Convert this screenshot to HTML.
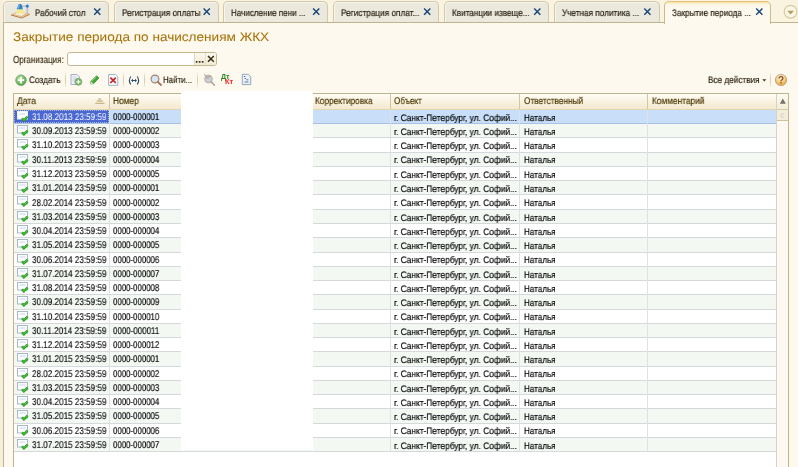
<!DOCTYPE html>
<html><head><meta charset="utf-8">
<style>
*{box-sizing:border-box;margin:0;padding:0}
html,body{width:798px;height:467px;overflow:hidden;background:#f6efdc}
body{position:relative;font-family:"Liberation Sans",sans-serif}
.a{position:absolute}
.t{position:absolute;white-space:nowrap;line-height:1;transform-origin:0 0;will-change:transform;text-rendering:geometricPrecision}
.tab{position:absolute;top:1px;height:22px;background:#ebe8dd;border:1px solid #d3c9aa;border-bottom:none;border-radius:5px 5px 0 0;box-shadow:inset 1px 1px 0 #f7f5ee}
.x{position:absolute;top:8px;width:8px;height:8px}
.panel{position:absolute;left:3px;top:22px;width:820px;height:460px;background:#fdf9ee;border:1px solid #bdb38f}
.atab{position:absolute;left:664px;top:1px;width:107px;height:23px;background:linear-gradient(#fbe3a8 0,#fdf6e2 2.5px,#fdf9ee 5px);border:1px solid #c8bb92;border-top-color:#e8c27a;border-bottom:none;border-radius:5px 5px 0 0}
.sep{position:absolute;top:73px;width:1px;height:14px;background:linear-gradient(rgba(214,202,168,0.2),#d9ceb0 35%,#d9ceb0 65%,rgba(214,202,168,0.2))}
.tbl{position:absolute;left:13px;top:93px;width:776px;height:380px;background:#fff;border:1px solid #bfb48e}
.hdr{position:absolute;left:14px;top:94px;width:763px;height:16px;background:linear-gradient(#fefcf5,#f4e9cf);border-bottom:1px solid #e2d6b2}
.vl{position:absolute;top:94px;width:1px;height:15px;background:#d2c69e}
.row{position:absolute;left:14px;width:763px;background:#fff;border-bottom:1px solid #d5d9dc}
.row.odd{background:#f3f8f3}
.row.sel{background:#c9def9;border-bottom:1px solid #a9c1e6}
.gl{position:absolute;top:110px;width:1px;height:341px;background:#dde1e8}
.ico{position:absolute;left:17px;width:12px;height:11px}
.ico i{position:absolute;left:0;top:0;width:11px;height:9px;border:1px solid #a9b6c6;background:#fbfcfe}
.ico i:after{content:"";position:absolute;left:2px;top:2px;width:6px;height:1px;background:#c5d2e4}
.ico b{position:absolute;left:4px;top:4px;width:8px;height:7px}
</style></head><body>

<!-- tabs -->
<div class="a" style="left:3px;top:0;width:795px;height:22px;background:#faf3df"></div>
<div class="tab" style="left:3px;width:106px"></div>
<div class="tab" style="left:114px;width:105px"></div>
<div class="tab" style="left:223px;width:105px"></div>
<div class="tab" style="left:333px;width:106px"></div>
<div class="tab" style="left:444px;width:105px"></div>
<div class="tab" style="left:554px;width:106px"></div>

<div class="panel"></div>
<div class="atab"></div>

<!-- tab icon -->
<svg class="a" style="left:0;top:0" width="34" height="22" viewBox="0 0 34 22">
  <path d="M11 14.3 L22 17.6 L29.7 13.6 L29.7 14.8 L22 18.6 L11 15.4 Z" fill="#b27a46"/>
  <path d="M11 14.3 L17.5 11.8 L29.7 13.5 L22 17.6 Z" fill="#e2b88a"/>
  <path d="M14 14.2 L18 12.6 L26 13.6 L21.5 16.1 Z" fill="#f8ecd8"/>
  <path d="M17.6 9 L22.4 9 L24.5 13.6 L16 13.6 Z" fill="#f2ea8e"/>
  <path d="M22 6.2 H26.5" stroke="#a6acbb" stroke-width="1"/>
  <rect x="26.5" y="7" width="1.6" height="6.5" fill="#b9bdc9"/>
  <circle cx="27.3" cy="6.1" r="1.6" fill="#2b80c9"/>
  <path d="M16.8 9.2 L18.4 4.6 Q20 3.6 21.6 4.6 L22.8 9.2 Z" fill="#2b80c9"/>
  <path d="M18.6 5.2 L19.8 4.8 L19 8.6 L17.9 8.6 Z" fill="#7fc0ee"/>
</svg>
<!-- tab close X's -->
<svg class="a" style="left:0;top:0" width="798" height="22">
 <g stroke="#1a4678" stroke-width="1.45" fill="none">
  <path d="M94.2 8.6 L100.4 14.8 M100.4 8.6 L94.2 14.8"/>
  <path d="M203.6 8.6 L209.8 14.8 M209.8 8.6 L203.6 14.8"/>
  <path d="M313.1 8.6 L319.3 14.8 M319.3 8.6 L313.1 14.8"/>
  <path d="M424.1 8.6 L430.3 14.8 M430.3 8.6 L424.1 14.8"/>
  <path d="M534.2 8.6 L540.4 14.8 M540.4 8.6 L534.2 14.8"/>
  <path d="M644.3 8.6 L650.5 14.8 M650.5 8.6 L644.3 14.8"/>
  <path d="M756.2 8.6 L762.4 14.8 M762.4 8.6 L756.2 14.8"/>
 </g>
 <circle cx="790.6" cy="11.7" r="6.4" fill="#fbf6e3" stroke="#d6caa2" stroke-width="1.2"/>
 <path d="M787.2 10.8 L794 10.8 L790.6 14.6 Z" fill="#b09e66"/>
</svg>

<!-- organization input -->
<div class="a" style="left:67px;top:52px;width:150px;height:14px;background:#fff;border:1px solid #c4b88f;border-radius:3px"></div>
<div class="a" style="left:195px;top:53px;width:21px;height:12px;background:linear-gradient(#fcf8ef,#f1ebd6);border-radius:0 2px 2px 0"></div>
<div class="a" style="left:194px;top:53px;width:1px;height:12px;background:#e0d8c0"></div>
<div class="a" style="left:205px;top:53px;width:1px;height:12px;background:#e6dfc8"></div>
<svg class="a" style="left:190px;top:50px" width="30" height="18">
  <rect x="5.8" y="11" width="1.7" height="1.7" fill="#3a2e12"/>
  <rect x="8.8" y="11" width="1.7" height="1.7" fill="#3a2e12"/>
  <rect x="11.8" y="11" width="1.7" height="1.7" fill="#3a2e12"/>
  <path d="M18 6 L23.8 11.8 M23.8 6 L18 11.8" stroke="#3a2e12" stroke-width="1.5"/>
</svg>

<!-- toolbar -->
<svg class="a" style="left:0;top:68px" width="270" height="22">
  <defs>
    <radialGradient id="gg" cx="40%" cy="35%" r="70%"><stop offset="0" stop-color="#bfe8a8"/><stop offset="1" stop-color="#4a9e3a"/></radialGradient>
    <radialGradient id="og" cx="40%" cy="35%" r="70%"><stop offset="0" stop-color="#fff0c0"/><stop offset="1" stop-color="#e89a3a"/></radialGradient>
  </defs>
  <circle cx="21" cy="12.2" r="5.3" fill="url(#gg)" stroke="#6a9a6a" stroke-width="0.7"/>
  <path d="M21 9 V15.4 M17.8 12.2 H24.2" stroke="#fff" stroke-width="1.8"/>
  <!-- copy doc -->
  <path d="M71 6.5 H77 L79.5 9 V16.5 H71 Z" fill="#eef2f8" stroke="#9aaac0" stroke-width="0.9"/>
  <path d="M72.5 9 H76 M72.5 11 H77.5 M72.5 13 H75" stroke="#c2ccd8" stroke-width="0.8"/>
  <circle cx="78.4" cy="13.8" r="3.5" fill="#6cbc58" stroke="#8a9a8a" stroke-width="0.7"/>
  <path d="M78.4 11.8 V15.8 M76.4 13.8 H80.4" stroke="#fff" stroke-width="1.3"/>
  <!-- pencil -->
  <path d="M90.3 15.9 L91 13.3 L96.6 7.7 L99 10.1 L93.4 15.7 Z" fill="#3fa533" stroke="#247c22" stroke-width="0.6"/>
  <path d="M92 13.2 L96.4 8.8" stroke="#a6e08a" stroke-width="0.9"/>
  <path d="M90.3 15.9 L91 13.3 L93.4 15.7 Z" fill="#d8efc8"/>
  <!-- delete doc -->
  <path d="M108.6 6.5 H115.5 L117.8 8.8 V17.3 H108.6 Z" fill="#fbfcff" stroke="#9aaac0" stroke-width="0.9"/>
  <path d="M110.4 9.6 L115.8 15 M115.8 9.6 L110.4 15" stroke="#c82020" stroke-width="1.7"/>
  <!-- (<->) -->
  <path d="M130.8 8.5 Q128 12.5 130.8 16.5 M137.2 8.5 Q140 12.5 137.2 16.5" stroke="#2d4868" stroke-width="1.1" fill="none"/>
  <path d="M131 12.5 L133 10.8 V14.2 Z M137 12.5 L135 10.8 V14.2 Z" fill="#2d4868"/>
  <rect x="132.5" y="12" width="3" height="1" fill="#2d4868"/>
  <!-- search -->
  <circle cx="155" cy="11" r="3.9" fill="#d6e4f4" stroke="#a07f66" stroke-width="1.1"/>
  <path d="M157.8 13.8 L161 17" stroke="#a57458" stroke-width="1.8" stroke-linecap="round"/>
  <!-- grey search -->
  <circle cx="208.5" cy="11" r="3.7" fill="#c8d0dc" stroke="#b9aca2" stroke-width="1.1"/>
  <path d="M204.3 6.3 L208.5 11 M206 9.6 L210.8 8.4" stroke="#b7a79c" stroke-width="1.1"/>
  <path d="M211.2 13.8 L214.2 17" stroke="#b9a69a" stroke-width="1.8" stroke-linecap="round"/>
  <!-- Dt Kt -->
  <text x="221" y="11.4" font-family="Liberation Sans" font-size="6.8" font-weight="bold" fill="#2a8424" textLength="8.6" lengthAdjust="spacingAndGlyphs" style="will-change:transform">Дт</text>
  <text x="225" y="16.4" font-family="Liberation Sans" font-size="6.8" font-weight="bold" fill="#f02828" textLength="8.3" lengthAdjust="spacingAndGlyphs" style="will-change:transform">Кт</text>
  <!-- report doc -->
  <path d="M242.3 6.3 H248.3 L250.7 8.7 V16.6 H242.3 Z" fill="#eef3fa" stroke="#8a9cb8" stroke-width="0.9"/>
  <path d="M243.8 8.5 H245.3 M244.5 10.5 H246 M246.3 11.8 H248.3 M244.5 14 H248.5" stroke="#4a6a90" stroke-width="0.9"/>
</svg>
<div class="sep" style="left:65px"></div>
<div class="sep" style="left:123px"></div>
<div class="sep" style="left:144px"></div>
<div class="sep" style="left:197px"></div>
<div class="sep" style="left:770px"></div>
<svg class="a" style="left:760px;top:70px" width="38" height="20">
  <path d="M2.3 9.3 H6.3 L4.3 11.5 Z" fill="#3b3121"/>
  <defs><radialGradient id="hg" cx="45%" cy="30%" r="75%"><stop offset="0" stop-color="#fff6d8"/><stop offset="0.55" stop-color="#f8cc7c"/><stop offset="1" stop-color="#e99a3c"/></radialGradient></defs>
  <circle cx="21" cy="10" r="5.6" fill="url(#hg)" stroke="#a8906e" stroke-width="0.7"/>
  <path d="M19.1 8.6 Q19.1 6.6 21 6.6 Q22.9 6.6 22.9 8.3 Q22.9 9.4 21.6 10 Q21 10.3 21 11.2" stroke="#7a5530" stroke-width="1.3" fill="none"/>
  <rect x="20.3" y="12.1" width="1.4" height="1.4" fill="#7a5530"/>
</svg>

<!-- table -->
<div class="tbl"></div>
<div class="hdr"></div>
<div class="vl" style="left:109px"></div>
<div class="vl" style="left:390px"></div>
<div class="vl" style="left:519px"></div>
<div class="vl" style="left:647px"></div>
<svg class="a" style="left:94px;top:96px" width="12" height="10">
  <rect x="4.2" y="2.2" width="2.8" height="1.6" rx="0.6" fill="#c9bb8a"/>
  <rect x="2.8" y="4.2" width="6" height="1.6" fill="#cabd8e"/>
  <rect x="1.3" y="6.7" width="9.2" height="1.3" fill="#c6b888"/>
</svg>
<div class="row sel" style="top:110px;height:14px"></div>
<div class="row odd" style="top:124px;height:14px"></div>
<div class="row" style="top:138px;height:15px"></div>
<div class="row odd" style="top:153px;height:14px"></div>
<div class="row" style="top:167px;height:14px"></div>
<div class="row odd" style="top:181px;height:14px"></div>
<div class="row" style="top:195px;height:15px"></div>
<div class="row odd" style="top:210px;height:14px"></div>
<div class="row" style="top:224px;height:14px"></div>
<div class="row odd" style="top:238px;height:15px"></div>
<div class="row" style="top:253px;height:14px"></div>
<div class="row odd" style="top:267px;height:14px"></div>
<div class="row" style="top:281px;height:14px"></div>
<div class="row odd" style="top:295px;height:15px"></div>
<div class="row" style="top:310px;height:14px"></div>
<div class="row odd" style="top:324px;height:14px"></div>
<div class="row" style="top:338px;height:14px"></div>
<div class="row odd" style="top:352px;height:15px"></div>
<div class="row" style="top:367px;height:14px"></div>
<div class="row odd" style="top:381px;height:14px"></div>
<div class="row" style="top:395px;height:14px"></div>
<div class="row odd" style="top:409px;height:15px"></div>
<div class="row" style="top:424px;height:14px"></div>
<div class="row odd" style="top:438px;height:14px"></div>
<div class="gl" style="left:109px"></div>
<div class="gl" style="left:390px"></div>
<div class="gl" style="left:519px"></div>
<div class="gl" style="left:647px"></div>
<!-- selected cell -->
<div class="a" style="left:14px;top:110px;width:95px;height:13px;background:#4b68d2;border:1px dotted #a8b8ee"></div>
<svg class="a" style="left:16px;top:109px" width="14" height="14"><rect x="1.5" y="2.5" width="10" height="7.5" fill="#fcfdff" stroke="#eef2fb"/><path d="M3.5 5 H9.5" stroke="#c9d6e8"/><path d="M6 9.3 L7.9 11.3 L11.6 7.6" stroke="#249a1c" stroke-width="2.4" fill="none"/><path d="M6 9.3 L7.9 11.3 L11.6 7.6" stroke="#58cc44" stroke-width="1.0" fill="none"/></svg>
<svg class="a" style="left:16px;top:123px" width="14" height="14"><rect x="1.5" y="2.5" width="10" height="7.5" fill="#fcfdff" stroke="#aab7c7"/><path d="M3.5 5 H9.5" stroke="#c9d6e8"/><path d="M6 9.3 L7.9 11.3 L11.6 7.6" stroke="#249a1c" stroke-width="2.4" fill="none"/><path d="M6 9.3 L7.9 11.3 L11.6 7.6" stroke="#58cc44" stroke-width="1.0" fill="none"/></svg>
<svg class="a" style="left:16px;top:137px" width="14" height="14"><rect x="1.5" y="2.5" width="10" height="7.5" fill="#fcfdff" stroke="#aab7c7"/><path d="M3.5 5 H9.5" stroke="#c9d6e8"/><path d="M6 9.3 L7.9 11.3 L11.6 7.6" stroke="#249a1c" stroke-width="2.4" fill="none"/><path d="M6 9.3 L7.9 11.3 L11.6 7.6" stroke="#58cc44" stroke-width="1.0" fill="none"/></svg>
<svg class="a" style="left:16px;top:152px" width="14" height="14"><rect x="1.5" y="2.5" width="10" height="7.5" fill="#fcfdff" stroke="#aab7c7"/><path d="M3.5 5 H9.5" stroke="#c9d6e8"/><path d="M6 9.3 L7.9 11.3 L11.6 7.6" stroke="#249a1c" stroke-width="2.4" fill="none"/><path d="M6 9.3 L7.9 11.3 L11.6 7.6" stroke="#58cc44" stroke-width="1.0" fill="none"/></svg>
<svg class="a" style="left:16px;top:166px" width="14" height="14"><rect x="1.5" y="2.5" width="10" height="7.5" fill="#fcfdff" stroke="#aab7c7"/><path d="M3.5 5 H9.5" stroke="#c9d6e8"/><path d="M6 9.3 L7.9 11.3 L11.6 7.6" stroke="#249a1c" stroke-width="2.4" fill="none"/><path d="M6 9.3 L7.9 11.3 L11.6 7.6" stroke="#58cc44" stroke-width="1.0" fill="none"/></svg>
<svg class="a" style="left:16px;top:180px" width="14" height="14"><rect x="1.5" y="2.5" width="10" height="7.5" fill="#fcfdff" stroke="#aab7c7"/><path d="M3.5 5 H9.5" stroke="#c9d6e8"/><path d="M6 9.3 L7.9 11.3 L11.6 7.6" stroke="#249a1c" stroke-width="2.4" fill="none"/><path d="M6 9.3 L7.9 11.3 L11.6 7.6" stroke="#58cc44" stroke-width="1.0" fill="none"/></svg>
<svg class="a" style="left:16px;top:194px" width="14" height="14"><rect x="1.5" y="2.5" width="10" height="7.5" fill="#fcfdff" stroke="#aab7c7"/><path d="M3.5 5 H9.5" stroke="#c9d6e8"/><path d="M6 9.3 L7.9 11.3 L11.6 7.6" stroke="#249a1c" stroke-width="2.4" fill="none"/><path d="M6 9.3 L7.9 11.3 L11.6 7.6" stroke="#58cc44" stroke-width="1.0" fill="none"/></svg>
<svg class="a" style="left:16px;top:209px" width="14" height="14"><rect x="1.5" y="2.5" width="10" height="7.5" fill="#fcfdff" stroke="#aab7c7"/><path d="M3.5 5 H9.5" stroke="#c9d6e8"/><path d="M6 9.3 L7.9 11.3 L11.6 7.6" stroke="#249a1c" stroke-width="2.4" fill="none"/><path d="M6 9.3 L7.9 11.3 L11.6 7.6" stroke="#58cc44" stroke-width="1.0" fill="none"/></svg>
<svg class="a" style="left:16px;top:223px" width="14" height="14"><rect x="1.5" y="2.5" width="10" height="7.5" fill="#fcfdff" stroke="#aab7c7"/><path d="M3.5 5 H9.5" stroke="#c9d6e8"/><path d="M6 9.3 L7.9 11.3 L11.6 7.6" stroke="#249a1c" stroke-width="2.4" fill="none"/><path d="M6 9.3 L7.9 11.3 L11.6 7.6" stroke="#58cc44" stroke-width="1.0" fill="none"/></svg>
<svg class="a" style="left:16px;top:237px" width="14" height="14"><rect x="1.5" y="2.5" width="10" height="7.5" fill="#fcfdff" stroke="#aab7c7"/><path d="M3.5 5 H9.5" stroke="#c9d6e8"/><path d="M6 9.3 L7.9 11.3 L11.6 7.6" stroke="#249a1c" stroke-width="2.4" fill="none"/><path d="M6 9.3 L7.9 11.3 L11.6 7.6" stroke="#58cc44" stroke-width="1.0" fill="none"/></svg>
<svg class="a" style="left:16px;top:252px" width="14" height="14"><rect x="1.5" y="2.5" width="10" height="7.5" fill="#fcfdff" stroke="#aab7c7"/><path d="M3.5 5 H9.5" stroke="#c9d6e8"/><path d="M6 9.3 L7.9 11.3 L11.6 7.6" stroke="#249a1c" stroke-width="2.4" fill="none"/><path d="M6 9.3 L7.9 11.3 L11.6 7.6" stroke="#58cc44" stroke-width="1.0" fill="none"/></svg>
<svg class="a" style="left:16px;top:266px" width="14" height="14"><rect x="1.5" y="2.5" width="10" height="7.5" fill="#fcfdff" stroke="#aab7c7"/><path d="M3.5 5 H9.5" stroke="#c9d6e8"/><path d="M6 9.3 L7.9 11.3 L11.6 7.6" stroke="#249a1c" stroke-width="2.4" fill="none"/><path d="M6 9.3 L7.9 11.3 L11.6 7.6" stroke="#58cc44" stroke-width="1.0" fill="none"/></svg>
<svg class="a" style="left:16px;top:280px" width="14" height="14"><rect x="1.5" y="2.5" width="10" height="7.5" fill="#fcfdff" stroke="#aab7c7"/><path d="M3.5 5 H9.5" stroke="#c9d6e8"/><path d="M6 9.3 L7.9 11.3 L11.6 7.6" stroke="#249a1c" stroke-width="2.4" fill="none"/><path d="M6 9.3 L7.9 11.3 L11.6 7.6" stroke="#58cc44" stroke-width="1.0" fill="none"/></svg>
<svg class="a" style="left:16px;top:294px" width="14" height="14"><rect x="1.5" y="2.5" width="10" height="7.5" fill="#fcfdff" stroke="#aab7c7"/><path d="M3.5 5 H9.5" stroke="#c9d6e8"/><path d="M6 9.3 L7.9 11.3 L11.6 7.6" stroke="#249a1c" stroke-width="2.4" fill="none"/><path d="M6 9.3 L7.9 11.3 L11.6 7.6" stroke="#58cc44" stroke-width="1.0" fill="none"/></svg>
<svg class="a" style="left:16px;top:309px" width="14" height="14"><rect x="1.5" y="2.5" width="10" height="7.5" fill="#fcfdff" stroke="#aab7c7"/><path d="M3.5 5 H9.5" stroke="#c9d6e8"/><path d="M6 9.3 L7.9 11.3 L11.6 7.6" stroke="#249a1c" stroke-width="2.4" fill="none"/><path d="M6 9.3 L7.9 11.3 L11.6 7.6" stroke="#58cc44" stroke-width="1.0" fill="none"/></svg>
<svg class="a" style="left:16px;top:323px" width="14" height="14"><rect x="1.5" y="2.5" width="10" height="7.5" fill="#fcfdff" stroke="#aab7c7"/><path d="M3.5 5 H9.5" stroke="#c9d6e8"/><path d="M6 9.3 L7.9 11.3 L11.6 7.6" stroke="#249a1c" stroke-width="2.4" fill="none"/><path d="M6 9.3 L7.9 11.3 L11.6 7.6" stroke="#58cc44" stroke-width="1.0" fill="none"/></svg>
<svg class="a" style="left:16px;top:337px" width="14" height="14"><rect x="1.5" y="2.5" width="10" height="7.5" fill="#fcfdff" stroke="#aab7c7"/><path d="M3.5 5 H9.5" stroke="#c9d6e8"/><path d="M6 9.3 L7.9 11.3 L11.6 7.6" stroke="#249a1c" stroke-width="2.4" fill="none"/><path d="M6 9.3 L7.9 11.3 L11.6 7.6" stroke="#58cc44" stroke-width="1.0" fill="none"/></svg>
<svg class="a" style="left:16px;top:351px" width="14" height="14"><rect x="1.5" y="2.5" width="10" height="7.5" fill="#fcfdff" stroke="#aab7c7"/><path d="M3.5 5 H9.5" stroke="#c9d6e8"/><path d="M6 9.3 L7.9 11.3 L11.6 7.6" stroke="#249a1c" stroke-width="2.4" fill="none"/><path d="M6 9.3 L7.9 11.3 L11.6 7.6" stroke="#58cc44" stroke-width="1.0" fill="none"/></svg>
<svg class="a" style="left:16px;top:366px" width="14" height="14"><rect x="1.5" y="2.5" width="10" height="7.5" fill="#fcfdff" stroke="#aab7c7"/><path d="M3.5 5 H9.5" stroke="#c9d6e8"/><path d="M6 9.3 L7.9 11.3 L11.6 7.6" stroke="#249a1c" stroke-width="2.4" fill="none"/><path d="M6 9.3 L7.9 11.3 L11.6 7.6" stroke="#58cc44" stroke-width="1.0" fill="none"/></svg>
<svg class="a" style="left:16px;top:380px" width="14" height="14"><rect x="1.5" y="2.5" width="10" height="7.5" fill="#fcfdff" stroke="#aab7c7"/><path d="M3.5 5 H9.5" stroke="#c9d6e8"/><path d="M6 9.3 L7.9 11.3 L11.6 7.6" stroke="#249a1c" stroke-width="2.4" fill="none"/><path d="M6 9.3 L7.9 11.3 L11.6 7.6" stroke="#58cc44" stroke-width="1.0" fill="none"/></svg>
<svg class="a" style="left:16px;top:394px" width="14" height="14"><rect x="1.5" y="2.5" width="10" height="7.5" fill="#fcfdff" stroke="#aab7c7"/><path d="M3.5 5 H9.5" stroke="#c9d6e8"/><path d="M6 9.3 L7.9 11.3 L11.6 7.6" stroke="#249a1c" stroke-width="2.4" fill="none"/><path d="M6 9.3 L7.9 11.3 L11.6 7.6" stroke="#58cc44" stroke-width="1.0" fill="none"/></svg>
<svg class="a" style="left:16px;top:408px" width="14" height="14"><rect x="1.5" y="2.5" width="10" height="7.5" fill="#fcfdff" stroke="#aab7c7"/><path d="M3.5 5 H9.5" stroke="#c9d6e8"/><path d="M6 9.3 L7.9 11.3 L11.6 7.6" stroke="#249a1c" stroke-width="2.4" fill="none"/><path d="M6 9.3 L7.9 11.3 L11.6 7.6" stroke="#58cc44" stroke-width="1.0" fill="none"/></svg>
<svg class="a" style="left:16px;top:423px" width="14" height="14"><rect x="1.5" y="2.5" width="10" height="7.5" fill="#fcfdff" stroke="#aab7c7"/><path d="M3.5 5 H9.5" stroke="#c9d6e8"/><path d="M6 9.3 L7.9 11.3 L11.6 7.6" stroke="#249a1c" stroke-width="2.4" fill="none"/><path d="M6 9.3 L7.9 11.3 L11.6 7.6" stroke="#58cc44" stroke-width="1.0" fill="none"/></svg>
<svg class="a" style="left:16px;top:437px" width="14" height="14"><rect x="1.5" y="2.5" width="10" height="7.5" fill="#fcfdff" stroke="#aab7c7"/><path d="M3.5 5 H9.5" stroke="#c9d6e8"/><path d="M6 9.3 L7.9 11.3 L11.6 7.6" stroke="#249a1c" stroke-width="2.4" fill="none"/><path d="M6 9.3 L7.9 11.3 L11.6 7.6" stroke="#58cc44" stroke-width="1.0" fill="none"/></svg>

<!-- scrollbar -->
<div class="a" style="left:776px;top:94px;width:1px;height:380px;background:#d8d2c0"></div>
<div class="a" style="left:777px;top:94px;width:11px;height:380px;background:#fdf8f2"></div>
<div class="a" style="left:777px;top:94px;width:11px;height:16px;background:linear-gradient(#fdfbf4,#f3ecd7);border-bottom:1px solid #d9cca4"></div>
<svg class="a" style="left:777px;top:94px" width="11" height="16"><path d="M5.8 4.6 L8.8 9.8 H2.8 Z" fill="#75716a"/></svg>
<div class="a" style="left:777px;top:110px;width:11px;height:11px;background:#f2eedb;border-bottom:1px solid #cfc29a"></div>
<svg class="a" style="left:777px;top:110px" width="11" height="11"><path d="M6.8 4.2 A1.8 1.8 0 1 0 6.8 7" stroke="#c9c3b4" stroke-width="0.9" fill="none"/></svg>

<div class="t" style="-webkit-text-stroke:0.2px #2c2416;left:34.6px;top:7.81px;font-size:9.4px;color:#2c2416;transform:scaleX(0.8563)">Рабочий стол</div>
<div class="t" style="-webkit-text-stroke:0.2px #2c2416;left:121.5px;top:7.81px;font-size:9.4px;color:#2c2416;transform:scaleX(0.8799)">Регистрация оплаты</div>
<div class="t" style="-webkit-text-stroke:0.2px #2c2416;left:230.8px;top:7.81px;font-size:9.4px;color:#2c2416;transform:scaleX(0.8610)">Начисление пени ...</div>
<div class="t" style="-webkit-text-stroke:0.2px #2c2416;left:340.8px;top:7.81px;font-size:9.4px;color:#2c2416;transform:scaleX(0.8784)">Регистрация оплат...</div>
<div class="t" style="-webkit-text-stroke:0.2px #2c2416;left:451.7px;top:7.81px;font-size:9.4px;color:#2c2416;transform:scaleX(0.8711)">Квитанции извеще...</div>
<div class="t" style="-webkit-text-stroke:0.2px #2c2416;left:562.0px;top:7.81px;font-size:9.4px;color:#2c2416;transform:scaleX(0.8736)">Учетная политика ...</div>
<div class="t" style="-webkit-text-stroke:0.2px #2c2416;left:672.3px;top:7.81px;font-size:9.4px;color:#2c2416;transform:scaleX(0.8657)">Закрытие периода ...</div>
<div class="t" style="-webkit-text-stroke:0.05px #a87208;left:13.0px;top:30.96px;font-size:12.4px;color:#a87208;transform:scaleX(1.0963)">Закрытие периода по начислениям ЖКХ</div>
<div class="t" style="-webkit-text-stroke:0.18px #3f3418;left:13.4px;top:55.83px;font-size:10.2px;color:#3f3418;transform:scaleX(0.7887)">Организация:</div>
<div class="t" style="-webkit-text-stroke:0.18px #2e2410;left:29.1px;top:75.62px;font-size:9.5px;color:#2e2410;transform:scaleX(0.8723)">Создать</div>
<div class="t" style="-webkit-text-stroke:0.18px #2e2410;left:163.1px;top:75.62px;font-size:9.5px;color:#2e2410;transform:scaleX(0.8307)">Найти...</div>
<div class="t" style="-webkit-text-stroke:0.18px #2e2410;left:707.8px;top:75.62px;font-size:9.5px;color:#2e2410;transform:scaleX(0.8636)">Все действия</div>
<div class="t" style="-webkit-text-stroke:0.18px #4e3a06;left:17.3px;top:97.34px;font-size:9.6px;color:#4e3a06;transform:scaleX(0.8894)">Дата</div>
<div class="t" style="-webkit-text-stroke:0.18px #4e3a06;left:112.8px;top:97.34px;font-size:9.6px;color:#4e3a06;transform:scaleX(0.8737)">Номер</div>
<div class="t" style="-webkit-text-stroke:0.18px #4e3a06;left:315.3px;top:97.34px;font-size:9.6px;color:#4e3a06;transform:scaleX(0.8660)">Корректировка</div>
<div class="t" style="-webkit-text-stroke:0.18px #4e3a06;left:394.2px;top:97.34px;font-size:9.6px;color:#4e3a06;transform:scaleX(0.8509)">Объект</div>
<div class="t" style="-webkit-text-stroke:0.18px #4e3a06;left:523.5px;top:97.34px;font-size:9.6px;color:#4e3a06;transform:scaleX(0.8626)">Ответственный</div>
<div class="t" style="-webkit-text-stroke:0.18px #4e3a06;left:651.7px;top:97.34px;font-size:9.6px;color:#4e3a06;transform:scaleX(0.8687)">Комментарий</div>
<div class="t" style="-webkit-text-stroke:0px #ffffff;left:32.3px;top:112.97px;font-size:9.8px;color:#ffffff;transform:scaleX(0.8277)">31.08.2013 23:59:59</div>
<div class="t" style="-webkit-text-stroke:0.18px #0a0a0a;left:112.8px;top:112.97px;font-size:9.8px;color:#0a0a0a;transform:scaleX(0.8017)">0000-000001</div>
<div class="t" style="-webkit-text-stroke:0.2px #0a0a0a;left:394.2px;top:112.71px;font-size:9.4px;color:#0a0a0a;transform:scaleX(0.8899)">г. Санкт-Петербург, ул. Софий...</div>
<div class="t" style="-webkit-text-stroke:0.2px #0a0a0a;left:523.5px;top:112.71px;font-size:9.4px;color:#0a0a0a;transform:scaleX(0.8628)">Наталья</div>
<div class="t" style="-webkit-text-stroke:0.18px #111111;left:32.3px;top:127.23px;font-size:9.8px;color:#111111;transform:scaleX(0.8277)">30.09.2013 23:59:59</div>
<div class="t" style="-webkit-text-stroke:0.18px #0a0a0a;left:112.8px;top:127.23px;font-size:9.8px;color:#0a0a0a;transform:scaleX(0.8017)">0000-000002</div>
<div class="t" style="-webkit-text-stroke:0.2px #0a0a0a;left:394.2px;top:126.97px;font-size:9.4px;color:#0a0a0a;transform:scaleX(0.8899)">г. Санкт-Петербург, ул. Софий...</div>
<div class="t" style="-webkit-text-stroke:0.2px #0a0a0a;left:523.5px;top:126.97px;font-size:9.4px;color:#0a0a0a;transform:scaleX(0.8628)">Наталья</div>
<div class="t" style="-webkit-text-stroke:0.18px #111111;left:32.3px;top:141.49px;font-size:9.8px;color:#111111;transform:scaleX(0.8277)">31.10.2013 23:59:59</div>
<div class="t" style="-webkit-text-stroke:0.18px #0a0a0a;left:112.8px;top:141.49px;font-size:9.8px;color:#0a0a0a;transform:scaleX(0.8017)">0000-000003</div>
<div class="t" style="-webkit-text-stroke:0.2px #0a0a0a;left:394.2px;top:141.23px;font-size:9.4px;color:#0a0a0a;transform:scaleX(0.8899)">г. Санкт-Петербург, ул. Софий...</div>
<div class="t" style="-webkit-text-stroke:0.2px #0a0a0a;left:523.5px;top:141.23px;font-size:9.4px;color:#0a0a0a;transform:scaleX(0.8628)">Наталья</div>
<div class="t" style="-webkit-text-stroke:0.18px #111111;left:32.3px;top:155.75px;font-size:9.8px;color:#111111;transform:scaleX(0.8343)">30.11.2013 23:59:59</div>
<div class="t" style="-webkit-text-stroke:0.18px #0a0a0a;left:112.8px;top:155.75px;font-size:9.8px;color:#0a0a0a;transform:scaleX(0.8017)">0000-000004</div>
<div class="t" style="-webkit-text-stroke:0.2px #0a0a0a;left:394.2px;top:155.49px;font-size:9.4px;color:#0a0a0a;transform:scaleX(0.8899)">г. Санкт-Петербург, ул. Софий...</div>
<div class="t" style="-webkit-text-stroke:0.2px #0a0a0a;left:523.5px;top:155.49px;font-size:9.4px;color:#0a0a0a;transform:scaleX(0.8628)">Наталья</div>
<div class="t" style="-webkit-text-stroke:0.18px #111111;left:32.3px;top:170.01px;font-size:9.8px;color:#111111;transform:scaleX(0.8277)">31.12.2013 23:59:59</div>
<div class="t" style="-webkit-text-stroke:0.18px #0a0a0a;left:112.8px;top:170.01px;font-size:9.8px;color:#0a0a0a;transform:scaleX(0.8017)">0000-000005</div>
<div class="t" style="-webkit-text-stroke:0.2px #0a0a0a;left:394.2px;top:169.75px;font-size:9.4px;color:#0a0a0a;transform:scaleX(0.8899)">г. Санкт-Петербург, ул. Софий...</div>
<div class="t" style="-webkit-text-stroke:0.2px #0a0a0a;left:523.5px;top:169.75px;font-size:9.4px;color:#0a0a0a;transform:scaleX(0.8628)">Наталья</div>
<div class="t" style="-webkit-text-stroke:0.18px #111111;left:32.3px;top:184.27px;font-size:9.8px;color:#111111;transform:scaleX(0.8277)">31.01.2014 23:59:59</div>
<div class="t" style="-webkit-text-stroke:0.18px #0a0a0a;left:112.8px;top:184.27px;font-size:9.8px;color:#0a0a0a;transform:scaleX(0.8017)">0000-000001</div>
<div class="t" style="-webkit-text-stroke:0.2px #0a0a0a;left:394.2px;top:184.01px;font-size:9.4px;color:#0a0a0a;transform:scaleX(0.8899)">г. Санкт-Петербург, ул. Софий...</div>
<div class="t" style="-webkit-text-stroke:0.2px #0a0a0a;left:523.5px;top:184.01px;font-size:9.4px;color:#0a0a0a;transform:scaleX(0.8628)">Наталья</div>
<div class="t" style="-webkit-text-stroke:0.18px #111111;left:32.3px;top:198.53px;font-size:9.8px;color:#111111;transform:scaleX(0.8277)">28.02.2014 23:59:59</div>
<div class="t" style="-webkit-text-stroke:0.18px #0a0a0a;left:112.8px;top:198.53px;font-size:9.8px;color:#0a0a0a;transform:scaleX(0.8017)">0000-000002</div>
<div class="t" style="-webkit-text-stroke:0.2px #0a0a0a;left:394.2px;top:198.27px;font-size:9.4px;color:#0a0a0a;transform:scaleX(0.8899)">г. Санкт-Петербург, ул. Софий...</div>
<div class="t" style="-webkit-text-stroke:0.2px #0a0a0a;left:523.5px;top:198.27px;font-size:9.4px;color:#0a0a0a;transform:scaleX(0.8628)">Наталья</div>
<div class="t" style="-webkit-text-stroke:0.18px #111111;left:32.3px;top:212.79px;font-size:9.8px;color:#111111;transform:scaleX(0.8277)">31.03.2014 23:59:59</div>
<div class="t" style="-webkit-text-stroke:0.18px #0a0a0a;left:112.8px;top:212.79px;font-size:9.8px;color:#0a0a0a;transform:scaleX(0.8017)">0000-000003</div>
<div class="t" style="-webkit-text-stroke:0.2px #0a0a0a;left:394.2px;top:212.53px;font-size:9.4px;color:#0a0a0a;transform:scaleX(0.8899)">г. Санкт-Петербург, ул. Софий...</div>
<div class="t" style="-webkit-text-stroke:0.2px #0a0a0a;left:523.5px;top:212.53px;font-size:9.4px;color:#0a0a0a;transform:scaleX(0.8628)">Наталья</div>
<div class="t" style="-webkit-text-stroke:0.18px #111111;left:32.3px;top:227.05px;font-size:9.8px;color:#111111;transform:scaleX(0.8277)">30.04.2014 23:59:59</div>
<div class="t" style="-webkit-text-stroke:0.18px #0a0a0a;left:112.8px;top:227.05px;font-size:9.8px;color:#0a0a0a;transform:scaleX(0.8017)">0000-000004</div>
<div class="t" style="-webkit-text-stroke:0.2px #0a0a0a;left:394.2px;top:226.79px;font-size:9.4px;color:#0a0a0a;transform:scaleX(0.8899)">г. Санкт-Петербург, ул. Софий...</div>
<div class="t" style="-webkit-text-stroke:0.2px #0a0a0a;left:523.5px;top:226.79px;font-size:9.4px;color:#0a0a0a;transform:scaleX(0.8628)">Наталья</div>
<div class="t" style="-webkit-text-stroke:0.18px #111111;left:32.3px;top:241.31px;font-size:9.8px;color:#111111;transform:scaleX(0.8277)">31.05.2014 23:59:59</div>
<div class="t" style="-webkit-text-stroke:0.18px #0a0a0a;left:112.8px;top:241.31px;font-size:9.8px;color:#0a0a0a;transform:scaleX(0.8017)">0000-000005</div>
<div class="t" style="-webkit-text-stroke:0.2px #0a0a0a;left:394.2px;top:241.05px;font-size:9.4px;color:#0a0a0a;transform:scaleX(0.8899)">г. Санкт-Петербург, ул. Софий...</div>
<div class="t" style="-webkit-text-stroke:0.2px #0a0a0a;left:523.5px;top:241.05px;font-size:9.4px;color:#0a0a0a;transform:scaleX(0.8628)">Наталья</div>
<div class="t" style="-webkit-text-stroke:0.18px #111111;left:32.3px;top:255.57px;font-size:9.8px;color:#111111;transform:scaleX(0.8277)">30.06.2014 23:59:59</div>
<div class="t" style="-webkit-text-stroke:0.18px #0a0a0a;left:112.8px;top:255.57px;font-size:9.8px;color:#0a0a0a;transform:scaleX(0.8017)">0000-000006</div>
<div class="t" style="-webkit-text-stroke:0.2px #0a0a0a;left:394.2px;top:255.31px;font-size:9.4px;color:#0a0a0a;transform:scaleX(0.8899)">г. Санкт-Петербург, ул. Софий...</div>
<div class="t" style="-webkit-text-stroke:0.2px #0a0a0a;left:523.5px;top:255.31px;font-size:9.4px;color:#0a0a0a;transform:scaleX(0.8628)">Наталья</div>
<div class="t" style="-webkit-text-stroke:0.18px #111111;left:32.3px;top:269.83px;font-size:9.8px;color:#111111;transform:scaleX(0.8277)">31.07.2014 23:59:59</div>
<div class="t" style="-webkit-text-stroke:0.18px #0a0a0a;left:112.8px;top:269.83px;font-size:9.8px;color:#0a0a0a;transform:scaleX(0.8017)">0000-000007</div>
<div class="t" style="-webkit-text-stroke:0.2px #0a0a0a;left:394.2px;top:269.57px;font-size:9.4px;color:#0a0a0a;transform:scaleX(0.8899)">г. Санкт-Петербург, ул. Софий...</div>
<div class="t" style="-webkit-text-stroke:0.2px #0a0a0a;left:523.5px;top:269.57px;font-size:9.4px;color:#0a0a0a;transform:scaleX(0.8628)">Наталья</div>
<div class="t" style="-webkit-text-stroke:0.18px #111111;left:32.3px;top:284.09px;font-size:9.8px;color:#111111;transform:scaleX(0.8277)">31.08.2014 23:59:59</div>
<div class="t" style="-webkit-text-stroke:0.18px #0a0a0a;left:112.8px;top:284.09px;font-size:9.8px;color:#0a0a0a;transform:scaleX(0.8017)">0000-000008</div>
<div class="t" style="-webkit-text-stroke:0.2px #0a0a0a;left:394.2px;top:283.83px;font-size:9.4px;color:#0a0a0a;transform:scaleX(0.8899)">г. Санкт-Петербург, ул. Софий...</div>
<div class="t" style="-webkit-text-stroke:0.2px #0a0a0a;left:523.5px;top:283.83px;font-size:9.4px;color:#0a0a0a;transform:scaleX(0.8628)">Наталья</div>
<div class="t" style="-webkit-text-stroke:0.18px #111111;left:32.3px;top:298.35px;font-size:9.8px;color:#111111;transform:scaleX(0.8277)">30.09.2014 23:59:59</div>
<div class="t" style="-webkit-text-stroke:0.18px #0a0a0a;left:112.8px;top:298.35px;font-size:9.8px;color:#0a0a0a;transform:scaleX(0.8017)">0000-000009</div>
<div class="t" style="-webkit-text-stroke:0.2px #0a0a0a;left:394.2px;top:298.09px;font-size:9.4px;color:#0a0a0a;transform:scaleX(0.8899)">г. Санкт-Петербург, ул. Софий...</div>
<div class="t" style="-webkit-text-stroke:0.2px #0a0a0a;left:523.5px;top:298.09px;font-size:9.4px;color:#0a0a0a;transform:scaleX(0.8628)">Наталья</div>
<div class="t" style="-webkit-text-stroke:0.18px #111111;left:32.3px;top:312.61px;font-size:9.8px;color:#111111;transform:scaleX(0.8277)">31.10.2014 23:59:59</div>
<div class="t" style="-webkit-text-stroke:0.18px #0a0a0a;left:112.8px;top:312.61px;font-size:9.8px;color:#0a0a0a;transform:scaleX(0.8017)">0000-000010</div>
<div class="t" style="-webkit-text-stroke:0.2px #0a0a0a;left:394.2px;top:312.35px;font-size:9.4px;color:#0a0a0a;transform:scaleX(0.8899)">г. Санкт-Петербург, ул. Софий...</div>
<div class="t" style="-webkit-text-stroke:0.2px #0a0a0a;left:523.5px;top:312.35px;font-size:9.4px;color:#0a0a0a;transform:scaleX(0.8628)">Наталья</div>
<div class="t" style="-webkit-text-stroke:0.18px #111111;left:32.3px;top:326.87px;font-size:9.8px;color:#111111;transform:scaleX(0.8343)">30.11.2014 23:59:59</div>
<div class="t" style="-webkit-text-stroke:0.18px #0a0a0a;left:112.8px;top:326.87px;font-size:9.8px;color:#0a0a0a;transform:scaleX(0.8118)">0000-000011</div>
<div class="t" style="-webkit-text-stroke:0.2px #0a0a0a;left:394.2px;top:326.61px;font-size:9.4px;color:#0a0a0a;transform:scaleX(0.8899)">г. Санкт-Петербург, ул. Софий...</div>
<div class="t" style="-webkit-text-stroke:0.2px #0a0a0a;left:523.5px;top:326.61px;font-size:9.4px;color:#0a0a0a;transform:scaleX(0.8628)">Наталья</div>
<div class="t" style="-webkit-text-stroke:0.18px #111111;left:32.3px;top:341.13px;font-size:9.8px;color:#111111;transform:scaleX(0.8277)">31.12.2014 23:59:59</div>
<div class="t" style="-webkit-text-stroke:0.18px #0a0a0a;left:112.8px;top:341.13px;font-size:9.8px;color:#0a0a0a;transform:scaleX(0.8017)">0000-000012</div>
<div class="t" style="-webkit-text-stroke:0.2px #0a0a0a;left:394.2px;top:340.87px;font-size:9.4px;color:#0a0a0a;transform:scaleX(0.8899)">г. Санкт-Петербург, ул. Софий...</div>
<div class="t" style="-webkit-text-stroke:0.2px #0a0a0a;left:523.5px;top:340.87px;font-size:9.4px;color:#0a0a0a;transform:scaleX(0.8628)">Наталья</div>
<div class="t" style="-webkit-text-stroke:0.18px #111111;left:32.3px;top:355.39px;font-size:9.8px;color:#111111;transform:scaleX(0.8277)">31.01.2015 23:59:59</div>
<div class="t" style="-webkit-text-stroke:0.18px #0a0a0a;left:112.8px;top:355.39px;font-size:9.8px;color:#0a0a0a;transform:scaleX(0.8017)">0000-000001</div>
<div class="t" style="-webkit-text-stroke:0.2px #0a0a0a;left:394.2px;top:355.13px;font-size:9.4px;color:#0a0a0a;transform:scaleX(0.8899)">г. Санкт-Петербург, ул. Софий...</div>
<div class="t" style="-webkit-text-stroke:0.2px #0a0a0a;left:523.5px;top:355.13px;font-size:9.4px;color:#0a0a0a;transform:scaleX(0.8628)">Наталья</div>
<div class="t" style="-webkit-text-stroke:0.18px #111111;left:32.3px;top:369.65px;font-size:9.8px;color:#111111;transform:scaleX(0.8277)">28.02.2015 23:59:59</div>
<div class="t" style="-webkit-text-stroke:0.18px #0a0a0a;left:112.8px;top:369.65px;font-size:9.8px;color:#0a0a0a;transform:scaleX(0.8017)">0000-000002</div>
<div class="t" style="-webkit-text-stroke:0.2px #0a0a0a;left:394.2px;top:369.39px;font-size:9.4px;color:#0a0a0a;transform:scaleX(0.8899)">г. Санкт-Петербург, ул. Софий...</div>
<div class="t" style="-webkit-text-stroke:0.2px #0a0a0a;left:523.5px;top:369.39px;font-size:9.4px;color:#0a0a0a;transform:scaleX(0.8628)">Наталья</div>
<div class="t" style="-webkit-text-stroke:0.18px #111111;left:32.3px;top:383.91px;font-size:9.8px;color:#111111;transform:scaleX(0.8277)">31.03.2015 23:59:59</div>
<div class="t" style="-webkit-text-stroke:0.18px #0a0a0a;left:112.8px;top:383.91px;font-size:9.8px;color:#0a0a0a;transform:scaleX(0.8017)">0000-000003</div>
<div class="t" style="-webkit-text-stroke:0.2px #0a0a0a;left:394.2px;top:383.65px;font-size:9.4px;color:#0a0a0a;transform:scaleX(0.8899)">г. Санкт-Петербург, ул. Софий...</div>
<div class="t" style="-webkit-text-stroke:0.2px #0a0a0a;left:523.5px;top:383.65px;font-size:9.4px;color:#0a0a0a;transform:scaleX(0.8628)">Наталья</div>
<div class="t" style="-webkit-text-stroke:0.18px #111111;left:32.3px;top:398.17px;font-size:9.8px;color:#111111;transform:scaleX(0.8277)">30.04.2015 23:59:59</div>
<div class="t" style="-webkit-text-stroke:0.18px #0a0a0a;left:112.8px;top:398.17px;font-size:9.8px;color:#0a0a0a;transform:scaleX(0.8017)">0000-000004</div>
<div class="t" style="-webkit-text-stroke:0.2px #0a0a0a;left:394.2px;top:397.91px;font-size:9.4px;color:#0a0a0a;transform:scaleX(0.8899)">г. Санкт-Петербург, ул. Софий...</div>
<div class="t" style="-webkit-text-stroke:0.2px #0a0a0a;left:523.5px;top:397.91px;font-size:9.4px;color:#0a0a0a;transform:scaleX(0.8628)">Наталья</div>
<div class="t" style="-webkit-text-stroke:0.18px #111111;left:32.3px;top:412.43px;font-size:9.8px;color:#111111;transform:scaleX(0.8277)">31.05.2015 23:59:59</div>
<div class="t" style="-webkit-text-stroke:0.18px #0a0a0a;left:112.8px;top:412.43px;font-size:9.8px;color:#0a0a0a;transform:scaleX(0.8017)">0000-000005</div>
<div class="t" style="-webkit-text-stroke:0.2px #0a0a0a;left:394.2px;top:412.17px;font-size:9.4px;color:#0a0a0a;transform:scaleX(0.8899)">г. Санкт-Петербург, ул. Софий...</div>
<div class="t" style="-webkit-text-stroke:0.2px #0a0a0a;left:523.5px;top:412.17px;font-size:9.4px;color:#0a0a0a;transform:scaleX(0.8628)">Наталья</div>
<div class="t" style="-webkit-text-stroke:0.18px #111111;left:32.3px;top:426.69px;font-size:9.8px;color:#111111;transform:scaleX(0.8277)">30.06.2015 23:59:59</div>
<div class="t" style="-webkit-text-stroke:0.18px #0a0a0a;left:112.8px;top:426.69px;font-size:9.8px;color:#0a0a0a;transform:scaleX(0.8017)">0000-000006</div>
<div class="t" style="-webkit-text-stroke:0.2px #0a0a0a;left:394.2px;top:426.43px;font-size:9.4px;color:#0a0a0a;transform:scaleX(0.8899)">г. Санкт-Петербург, ул. Софий...</div>
<div class="t" style="-webkit-text-stroke:0.2px #0a0a0a;left:523.5px;top:426.43px;font-size:9.4px;color:#0a0a0a;transform:scaleX(0.8628)">Наталья</div>
<div class="t" style="-webkit-text-stroke:0.18px #111111;left:32.3px;top:440.95px;font-size:9.8px;color:#111111;transform:scaleX(0.8277)">31.07.2015 23:59:59</div>
<div class="t" style="-webkit-text-stroke:0.18px #0a0a0a;left:112.8px;top:440.95px;font-size:9.8px;color:#0a0a0a;transform:scaleX(0.8017)">0000-000007</div>
<div class="t" style="-webkit-text-stroke:0.2px #0a0a0a;left:394.2px;top:440.69px;font-size:9.4px;color:#0a0a0a;transform:scaleX(0.8899)">г. Санкт-Петербург, ул. Софий...</div>
<div class="t" style="-webkit-text-stroke:0.2px #0a0a0a;left:523.5px;top:440.69px;font-size:9.4px;color:#0a0a0a;transform:scaleX(0.8628)">Наталья</div>

<!-- white blanking rect -->
<div class="a" style="left:181px;top:91px;width:132px;height:359px;background:#fff"></div>
</body></html>
